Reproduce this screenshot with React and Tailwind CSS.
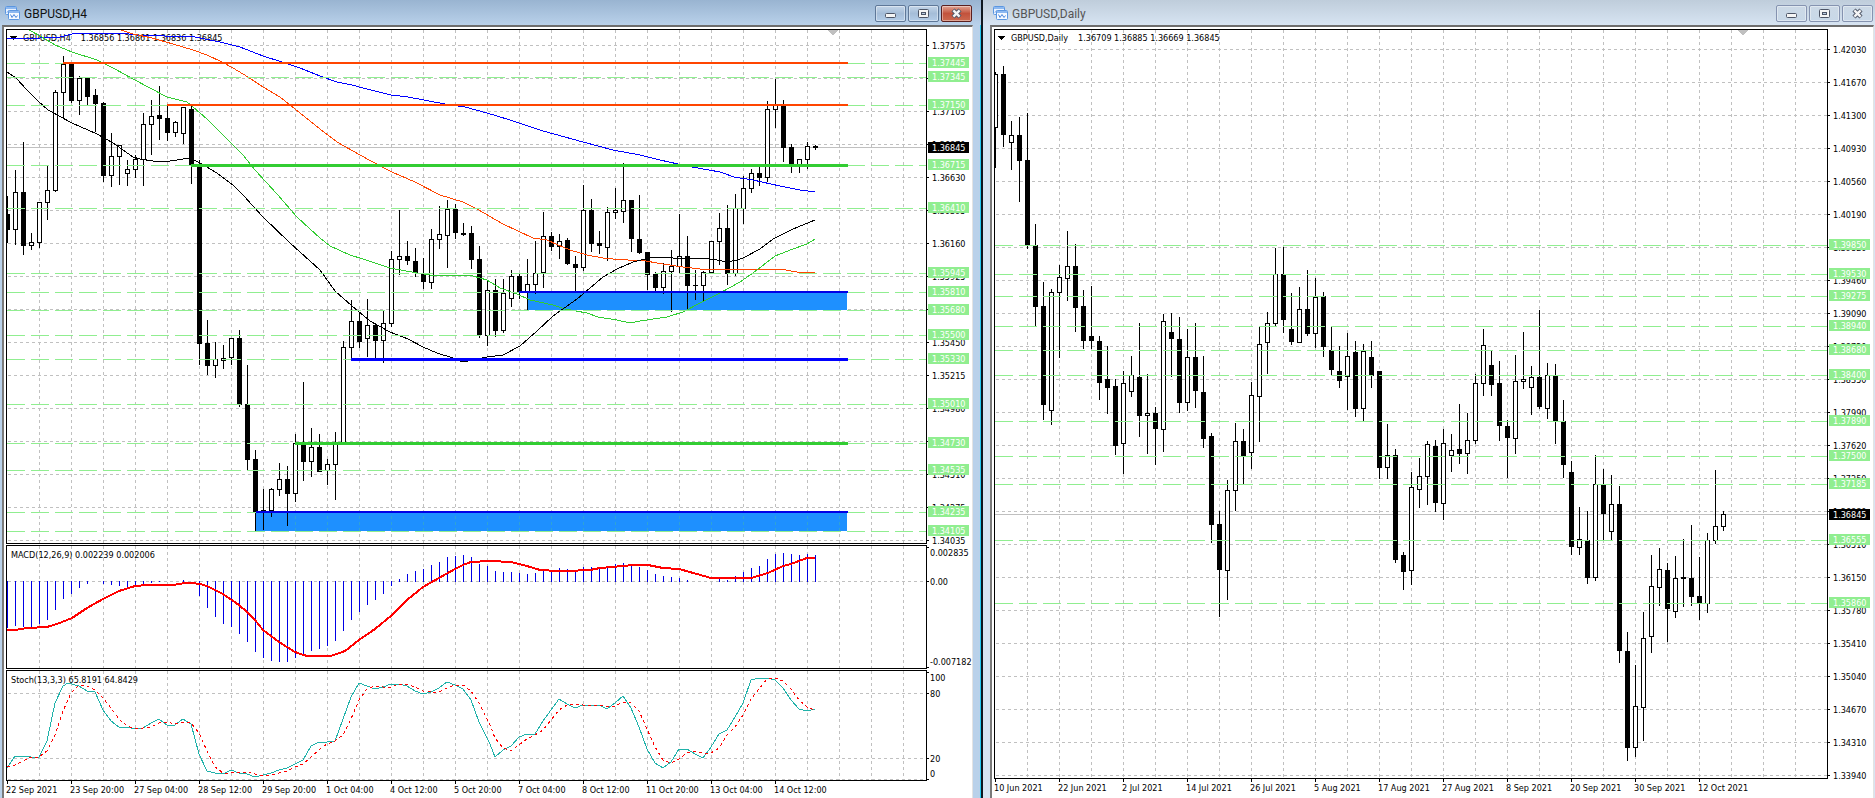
import React from "react";

// [high, body top, body bottom, low, bearish] for every bar, 8px apart
const h4Candles = [
  [196, 214, 230, 243, 1], [170, 192, 230, 245, 0], [142, 192, 246, 255, 1], [233, 242, 246, 250, 0],
  [202, 202, 243, 248, 0], [166, 190, 203, 220, 0], [90, 92, 191, 192, 0], [56, 64, 93, 119, 0],
  [63, 64, 101, 103, 1], [76, 78, 101, 115, 0], [77, 78, 97, 105, 1], [89, 95, 104, 132, 1],
  [102, 103, 176, 182, 1], [133, 156, 176, 187, 0], [145, 145, 157, 185, 0], [160, 169, 174, 186, 0],
  [155, 159, 170, 178, 0], [113, 124, 160, 186, 0], [100, 116, 125, 155, 0], [86, 115, 119, 140, 1],
  [104, 118, 133, 141, 1], [121, 122, 133, 137, 0], [107, 107, 134, 144, 0], [104, 109, 165, 184, 1],
  [160, 165, 344, 365, 1], [320, 343, 366, 375, 1], [342, 359, 366, 378, 0], [345, 358, 361, 369, 0],
  [338, 338, 358, 365, 0], [330, 338, 405, 407, 1], [365, 404, 460, 470, 1], [450, 459, 512, 531, 1],
  [489, 510, 511, 530, 1], [488, 489, 511, 517, 0], [463, 479, 490, 496, 0], [466, 479, 494, 526, 1],
  [434, 443, 494, 502, 0], [382, 443, 462, 481, 1], [428, 447, 462, 477, 0], [434, 447, 472, 472, 1],
  [459, 464, 471, 485, 0], [432, 443, 465, 500, 0], [341, 347, 443, 443, 0], [300, 321, 348, 359, 0],
  [313, 321, 342, 348, 1], [299, 325, 339, 357, 0], [325, 325, 341, 359, 1], [311, 323, 341, 363, 0],
  [251, 259, 324, 327, 0], [210, 256, 260, 275, 0], [241, 256, 261, 265, 1], [248, 261, 273, 277, 1],
  [258, 273, 282, 289, 1], [229, 239, 283, 289, 0], [206, 234, 240, 249, 0], [200, 209, 236, 268, 0],
  [204, 209, 233, 239, 1], [223, 233, 235, 236, 1], [226, 233, 260, 269, 1], [246, 259, 335, 338, 1],
  [281, 290, 336, 346, 0], [279, 290, 331, 337, 1], [279, 293, 331, 333, 0], [270, 276, 299, 307, 0],
  [274, 276, 292, 299, 1], [259, 284, 293, 310, 0], [241, 273, 285, 294, 0], [212, 236, 273, 288, 0],
  [232, 236, 247, 251, 1], [234, 241, 247, 259, 0], [238, 240, 264, 265, 1], [256, 264, 268, 292, 1],
  [185, 210, 268, 271, 0], [199, 210, 244, 252, 1], [231, 243, 246, 254, 1], [207, 212, 248, 261, 0],
  [188, 210, 213, 219, 0], [163, 200, 212, 223, 0], [200, 200, 239, 252, 1], [195, 239, 253, 254, 1],
  [252, 252, 275, 290, 1], [272, 274, 288, 292, 1], [263, 271, 288, 294, 0], [250, 266, 272, 312, 0],
  [214, 256, 267, 273, 0], [236, 256, 286, 310, 1], [270, 285, 286, 300, 1], [271, 272, 286, 301, 0],
  [241, 241, 273, 273, 0], [213, 228, 242, 265, 0], [205, 228, 274, 285, 1], [194, 208, 274, 276, 0],
  [176, 188, 209, 224, 0], [169, 173, 189, 193, 0], [167, 173, 178, 186, 1], [101, 109, 178, 182, 0],
  [79, 105, 110, 128, 0], [100, 105, 148, 162, 1], [144, 147, 165, 173, 1], [159, 159, 165, 173, 0],
  [142, 146, 160, 169, 0], [145, 146, 148, 150, 1],
];

const dailyCandles = [
  [72, 74, 128, 168, 0], [66, 74, 135, 147, 1], [121, 135, 143, 170, 0], [117, 135, 161, 202, 1],
  [113, 160, 245, 249, 1], [224, 245, 307, 326, 1], [282, 306, 405, 420, 1], [289, 292, 411, 425, 0],
  [265, 277, 293, 358, 0], [231, 266, 279, 301, 0], [244, 266, 308, 332, 1], [290, 306, 341, 349, 1],
  [286, 336, 341, 349, 1], [336, 341, 383, 400, 1], [346, 379, 388, 414, 1], [379, 386, 446, 455, 1],
  [371, 383, 444, 474, 0], [356, 375, 392, 397, 0], [323, 377, 416, 437, 1], [374, 413, 416, 454, 0],
  [407, 413, 429, 465, 1], [314, 321, 430, 452, 0], [313, 332, 339, 377, 1], [317, 339, 403, 413, 1],
  [329, 357, 403, 411, 0], [323, 357, 391, 408, 1], [356, 392, 439, 448, 1], [433, 436, 525, 543, 1],
  [511, 524, 570, 617, 1], [480, 490, 571, 600, 0], [423, 441, 491, 511, 0], [429, 441, 456, 484, 1],
  [382, 395, 453, 469, 0], [327, 344, 397, 442, 0], [312, 323, 343, 374, 0], [248, 274, 324, 326, 0],
  [247, 274, 320, 333, 1], [293, 329, 342, 345, 1], [287, 309, 343, 343, 0], [270, 309, 334, 336, 1],
  [278, 297, 334, 348, 0], [292, 296, 347, 357, 1], [327, 350, 370, 375, 1], [346, 371, 381, 388, 1],
  [333, 356, 377, 410, 0], [341, 352, 409, 417, 1], [344, 351, 409, 421, 0], [341, 357, 376, 388, 1],
  [371, 371, 468, 479, 1], [424, 455, 468, 479, 0], [449, 455, 560, 563, 1], [552, 555, 572, 590, 1],
  [472, 487, 571, 585, 0], [458, 476, 490, 508, 0], [441, 444, 477, 505, 0], [440, 446, 503, 512, 1],
  [429, 443, 504, 520, 0], [434, 450, 456, 472, 0], [404, 449, 454, 464, 1], [413, 440, 454, 474, 0],
  [374, 383, 441, 444, 0], [329, 345, 384, 396, 0], [351, 365, 385, 396, 1], [361, 383, 426, 441, 1],
  [420, 426, 438, 478, 1], [355, 381, 439, 454, 0], [332, 379, 382, 389, 0], [366, 377, 388, 415, 0],
  [310, 377, 407, 409, 1], [363, 375, 409, 419, 0], [364, 376, 421, 444, 1], [400, 421, 465, 478, 1],
  [461, 472, 547, 555, 1], [507, 539, 548, 555, 0], [511, 540, 578, 584, 1], [455, 484, 578, 581, 0],
  [469, 484, 514, 540, 1], [475, 504, 532, 540, 0], [486, 504, 651, 663, 1], [632, 651, 748, 761, 1],
  [665, 706, 748, 757, 0], [612, 638, 708, 741, 0], [555, 586, 637, 653, 0], [548, 569, 588, 606, 0],
  [563, 570, 609, 642, 1], [556, 578, 612, 618, 0], [539, 577, 579, 607, 1], [525, 578, 597, 606, 1],
  [557, 596, 603, 620, 1], [533, 540, 604, 613, 0], [470, 526, 541, 544, 0], [511, 514, 527, 531, 0],
];

// moving averages of the H4 chart
const averages = [
  {
    color: "#0000ff",
    points:
      "7,38 40,38 60,37 72,34 90,33 120,33 137,35 165,36 190,36 200,38 220,42 240,47 263,56 282,62 300,68 320,76 337,82 352,85 363,88 391,95 408,97 445,104 465,107 487,113 510,120 543,131 583,142 613,150 640,155 660,160 678,164 692,167 720,172 734,177 753,180 780,186 800,190 815,192",
  },
  {
    color: "#ff4500",
    points:
      "121,30 133,34 152,38 173,44 193,50 207,55 222,62 233,68 248,77 263,87 280,97 295,109 320,129 337,142 360,155 382,167 392,172 415,182 440,195 463,202 477,209 503,224 533,238 547,240 558,245 570,250 587,255 603,258 613,259 628,260 640,260 663,264 683,267 700,269 720,269 733,270 740,269 780,269 797,272 815,272",
  },
  {
    color: "#32cd32",
    points:
      "29,30 42,37 55,45 72,52 97,60 115,69 133,79 150,88 167,97 187,102 193,107 207,119 230,142 243,155 255,170 277,194 297,217 310,229 320,238 330,246 350,255 363,259 390,268 417,273 437,276 450,275 473,276 487,280 500,288 517,294 530,300 553,305 565,309 587,313 598,317 617,320 630,323 640,321 667,317 683,312 700,303 720,293 740,282 753,273 775,256 793,249 807,244 815,239",
  },
  {
    color: "#000000",
    points:
      "7,72 16,78 27,90 37,100 48,110 72,123 97,134 113,143 133,157 140,159 153,161 170,161 190,158 200,163 217,173 233,185 243,195 263,217 290,243 320,270 335,291 352,306 370,321 390,332 408,339 423,347 437,353 453,358 460,361 468,361 478,359 487,357 503,355 520,346 537,331 553,316 577,299 603,277 617,269 633,262 653,257 673,258 700,258 717,260 727,262 737,260 743,258 760,249 773,239 793,229 815,220",
  },
];

const macdBars = [
  47, 45, 46, 46, 43, 39, 29, 18, 13, 7, 3, 0, 3, 4, 5, 6, 5, 4, 2, 1, 0, 0, -1, 0, 15, 27, 36, 43,
  46, 53, 61, 71, 77, 80, 81, 81, 77, 74, 70, 68, 65, 60, 50, 39, 31, 24, 19, 13, 5, -2, -7, -10,
  -12, -16, -19, -24, -25, -26, -24, -17, -15, -10, -9, -9, -8, -7, -8, -11, -10, -13, -12, -10,
  -14, -14, -13, -15, -17, -18, -17, -14, -11, -7, -5, -4, -3, -1, 0, 0, 0, -2, -1, -5, -9, -13,
  -15, -22, -27, -28, -27, -26, -27, -26,
];

const macdSignal =
  "7,630 15,630 27,628 47,627 57,624 72,618 87,608 103,599 119,591 135,586 147,585 173,585 185,583 192,583 200,584 207,586 223,594 239,605 247,612 255,620 263,630 279,642 295,652 303,655 308,656 330,656 337,654 345,651 359,640 375,629 392,615 407,600 423,587 439,578 455,569 463,565 471,562 490,561 511,562 527,566 540,570 557,571 567,571 590,570 600,568 623,566 633,565 648,565 663,568 679,569 697,574 711,578 751,578 768,573 783,566 791,564 807,558 815,558";

const stochMain =
  "7,768 15,756 25,756 31,757 39,757 47,741 55,703 63,686 68,683 79,686 87,691 95,692 103,710 111,721 119,727 127,727 135,729 143,728 151,723 159,719 167,725 175,725 183,719 191,724 199,754 207,771 215,773 223,774 231,770 239,773 247,774 255,777 263,775 271,773 279,770 287,768 295,764 303,760 311,746 319,742 327,742 335,741 343,719 351,697 359,683 367,686 375,689 383,687 391,684 399,684 407,686 415,691 423,694 431,692 439,688 447,682 455,685 463,689 471,700 479,722 490,744 495,757 503,750 511,746 519,737 527,734 535,734 543,721 551,710 559,699 567,704 575,708 583,705 599,705 607,709 615,703 623,696 631,708 639,727 647,749 655,763 663,768 671,762 679,749 687,749 695,754 703,758 711,747 719,734 727,730 735,717 743,703 751,680 759,678 768,678 775,680 783,688 791,700 799,709 807,711 815,709";

const stochSignal =
  "7,767 15,765 23,761 31,757 39,757 47,751 55,735 63,711 71,693 79,685 87,686 95,690 103,698 111,708 119,719 127,726 135,729 143,728 151,727 159,723 167,722 175,724 183,722 191,723 199,733 207,751 215,767 223,773 231,773 239,772 247,772 255,774 263,776 271,775 279,773 287,771 295,767 303,764 311,757 319,750 327,744 335,741 343,735 351,719 359,700 367,689 375,686 383,687 391,687 399,684 407,684 415,687 423,691 431,692 439,692 447,688 455,685 463,685 471,691 479,703 490,725 495,738 503,748 511,751 519,745 527,739 535,735 543,730 551,720 559,710 567,705 575,704 583,705 591,706 599,705 607,707 615,706 623,702 631,703 639,711 647,729 655,747 663,760 671,763 679,759 687,753 695,751 703,753 711,753 719,748 727,735 735,727 743,715 751,699 759,689 767,679 775,678 783,681 791,689 799,700 807,707 815,710";

const h4Prices = [
  "1.37575", "1.37340", "1.37105", "1.36870", "1.36630", "1.36395", "1.36160", "1.35925",
  "1.35690", "1.35450", "1.35215", "1.34980", "1.34745", "1.34510", "1.34275", "1.34035",
];
const dailyPrices = [
  "1.42030", "1.41670", "1.41300", "1.40930", "1.40560", "1.40190", "1.39820", "1.39460",
  "1.39090", "1.38720", "1.38350", "1.37990", "1.37620", "1.37250", "1.36880", "1.36510",
  "1.36150", "1.35780", "1.35410", "1.35040", "1.34670", "1.34310", "1.33940",
];

const h4Levels = [
  ["1.37445", 63], ["1.37345", 77], ["1.37150", 105], ["1.36715", 165], ["1.36410", 208],
  ["1.35945", 273], ["1.35810", 292], ["1.35680", 310], ["1.35500", 335], ["1.35330", 359],
  ["1.35010", 404], ["1.34730", 443], ["1.34535", 470], ["1.34235", 512], ["1.34105", 531],
];
const dailyLevels = [
  ["1.39850", 245], ["1.39530", 274], ["1.39275", 296], ["1.38940", 326], ["1.38680", 350],
  ["1.38400", 375], ["1.37890", 421], ["1.37500", 456], ["1.37185", 484], ["1.36555", 540],
  ["1.35860", 603],
];

const h4Times = [
  "22 Sep 2021", "23 Sep 20:00", "27 Sep 04:00", "28 Sep 12:00", "29 Sep 20:00", "1 Oct 04:00",
  "4 Oct 12:00", "5 Oct 20:00", "7 Oct 04:00", "8 Oct 12:00", "11 Oct 20:00", "13 Oct 04:00",
  "14 Oct 12:00",
];
const dailyTimes = [
  "10 Jun 2021", "22 Jun 2021", "2 Jul 2021", "14 Jul 2021", "26 Jul 2021", "5 Aug 2021",
  "17 Aug 2021", "27 Aug 2021", "8 Sep 2021", "20 Sep 2021", "30 Sep 2021", "12 Oct 2021",
];

// solid level lines of the H4 chart: [x, y, thickness, color]
const h4Lines = [
  [63, 62, 2, "#ff4500"],
  [167, 104, 2, "#ff4500"],
  [191, 164, 3, "#32cd32"],
  [295, 442, 3, "#32cd32"],
  [519, 291, 2, "#0000e6"],
  [351, 358, 3, "#0000ff"],
  [256, 511, 2, "#0000e6"],
];

const steps = (from, step, count) =>
  Array.from({ length: count }, (_, i) => from + i * step);

function Grid({ left, xs, ys, top, bottom }) {
  return (
    <g stroke="#c0c0c0" strokeDasharray="3 3">
      {xs.map((x) => (
        <line key={x} x1={x + 0.5} x2={x + 0.5} y1={top} y2={bottom} />
      ))}
      {ys.map((y) => (
        <line key={y} x1={left + 1} x2={left + 2000} y1={y + 0.5} y2={y + 0.5} />
      ))}
    </g>
  );
}

function Candles({ data, left }) {
  return data.map(([high, top, bottom, low, down], i) => {
    const x = left + i * 8;
    return (
      <g key={i}>
        <rect x={x} y={high} width="1" height={low - high} fill="#000" />
        <rect x={x - 2} y={top} width="5" height={bottom - top} fill="#000" />
        {!down && (
          <rect x={x - 1} y={top + 1} width="3" height={Math.max(bottom - top - 2, 0)} fill="#fff" />
        )}
      </g>
    );
  });
}

function Levels({ levels, left }) {
  return (
    <g stroke="#90ee90" strokeDasharray="18 6">
      {levels.map(([label, y]) => (
        <line key={label} x1={left} x2={left + 2000} y1={y + 0.5} y2={y + 0.5} />
      ))}
    </g>
  );
}

// a bordered plot with its value axis on the right
function Panel({ className, left, top, axis, axisLeft, children }) {
  return (
    <div className={`flex min-h-0 ${className}`}>
      <div className="min-w-0 flex-1 overflow-hidden border border-black">
        <svg className="block h-full w-full text-[9px]" shapeRendering="crispEdges">
          <g transform={`translate(${-left} ${-top - 1})`}>{children}</g>
        </svg>
      </div>
      <svg
        className="block h-full w-[45px] shrink-0 overflow-visible text-[9px]"
        shapeRendering="crispEdges"
      >
        <g transform={`translate(${-axisLeft} ${-top})`}>{axis}</g>
      </svg>
    </div>
  );
}

function PriceAxis({ left, prices, firstY, levels, current, currentY }) {
  return (
    <>
      {prices.map((price, i) => (
        <g key={price}>
          <rect x={left} y={firstY + i * 33} width="2" height="1" />
          <text x={left + 5} y={firstY + i * 33 + 4}>
            {price}
          </text>
        </g>
      ))}
      {levels.map(([label, y]) => (
        <g key={label}>
          <rect x={left + 1} y={y - 6} width="41" height="11" fill="#90ee90" />
          <text x={left + 5} y={y + 3} fill="#fff">
            {label}
          </text>
        </g>
      ))}
      <rect x={left + 1} y={currentY - 5} width="41" height="11" />
      <text x={left + 5} y={currentY + 4} fill="#fff">
        {current}
      </text>
    </>
  );
}

function TimeAxis({ times, className }) {
  return (
    <svg className={`block w-full shrink-0 text-[9px] ${className}`} shapeRendering="crispEdges">
      {times.map((time, i) => (
        <g key={time}>
          <rect x={i * 64 + 1} y="0" width="1" height="3" />
          <text x={i * 64} y="12">
            {time}
          </text>
        </g>
      ))}
    </svg>
  );
}

function ChartIcon() {
  return (
    <svg className="h-[15px] w-[15px] shrink-0" viewBox="0 0 15 15" fill="none">
      <rect x="0.5" y="1.5" width="11" height="8" rx="1" fill="#e8f2ff" stroke="#5b96e0" />
      <rect x="1" y="2" width="10" height="2" fill="#8cb8f0" />
      <path d="M2 7.5 L4 5.5 L5 7" stroke="#4a86dc" />
      <rect x="3.5" y="5.5" width="11" height="9" rx="1" fill="#f6faff" stroke="#5b96e0" />
      <rect x="4" y="6" width="10" height="2" fill="#8cb8f0" />
      <path d="M5.5 9.5 L7 12.5 L9 9.5 L11 12.5 L12.5 10.5" stroke="#4a86dc" />
    </svg>
  );
}

function MinimizeGlyph() {
  return (
    <svg className="h-[11px] w-[13px]" viewBox="0 0 13 11">
      <rect x="1.5" y="5.5" width="10" height="4" rx="1" fill="#f5f5f5" stroke="#4d5566" />
    </svg>
  );
}

function MaximizeGlyph() {
  return (
    <svg className="h-[11px] w-[13px]" viewBox="0 0 13 11">
      <rect x="1.5" y="1.5" width="10" height="8" rx="1" fill="#f5f5f5" stroke="#4d5566" />
      <rect x="4.5" y="4.5" width="4" height="2" fill="#b9cbe0" stroke="#4d5566" />
    </svg>
  );
}

function CloseGlyph() {
  return (
    <svg className="h-[11px] w-[13px]" viewBox="0 0 13 11">
      <path d="M3 2 L10 9 M10 2 L3 9" stroke="#4d5566" strokeWidth="4.4" />
      <path d="M3.4 2.4 L9.6 8.6 M9.6 2.4 L3.4 8.6" stroke="#f5f5f5" strokeWidth="2.4" />
    </svg>
  );
}

function TitleBar({ title, active }) {
  const button = active
    ? "border-[#5f7898] bg-linear-to-b from-[#c3d5e8] via-[#a5bdd8] to-[#b4cde8]"
    : "border-[#8593b0] bg-linear-to-b from-[#ccd9e6] to-[#c8d8e8]";
  const close = active
    ? "border-[#5a2020] bg-linear-to-b from-[#e0a493] via-[#c2523c] to-[#cc6a50]"
    : "border-[#8593b0] bg-linear-to-b from-[#ccd9e6] to-[#c8d8e8]";
  const base =
    "flex h-[17px] w-[31px] items-center justify-center rounded-xs border inset-ring inset-ring-white/40";

  return (
    <header
      className={`flex h-[25px] shrink-0 items-center gap-1 bg-linear-to-b ${
        active
          ? "from-[#99b4d1] to-[#b9d1ea] pr-[9px] pl-[5px]"
          : "from-[#bfcddb] to-[#d7e4f2] pr-[2px] pl-[10px]"
      }`}
    >
      <ChartIcon />
      <h2
        className={`flex-1 pt-[2px] font-[Roboto,sans-serif] text-xs ${
          active ? "text-[#111]" : "text-[#555]"
        }`}
      >
        {title}
      </h2>
      <div className="flex gap-[2px] pt-[2px]">
        <button aria-label="Minimize" className={`${base} ${button}`}>
          <MinimizeGlyph />
        </button>
        <button aria-label="Maximize" className={`${base} ${button}`}>
          <MaximizeGlyph />
        </button>
        <button aria-label="Close" className={`${base} ${close}`}>
          <CloseGlyph />
        </button>
      </div>
    </header>
  );
}

function Caption({ left, symbol, values }) {
  return (
    <>
      <path d={`M${left + 3} 36 h7 l-3 4 h-1 z`} />
      <text x={left + 16} y="41">
        {symbol}
        <tspan dx="10">{values}</tspan>
      </text>
    </>
  );
}

function H4Window() {
  const xs = steps(39, 32, 28);
  return (
    <section className="flex min-w-0 flex-[981] flex-col border-r-2 border-[#101820] bg-[#b9d1ea]">
      <TitleBar title="GBPUSD,H4" active />
      <div className="flex min-h-0 flex-1 border-r border-[#22c8f0] pr-[7px] pl-[2px]">
        <div className="flex min-w-0 flex-1 flex-col gap-px border-t-2 border-r border-l-2 border-t-[#6d6d6d] border-r-[#e3e3e3] border-l-[#7a7a7a] bg-white pt-[2px] pl-[2px]">
          <Panel
            className="flex-1"
            left={7}
            top={29}
            axisLeft={927}
            axis={
              <PriceAxis
                left={927}
                prices={h4Prices}
                firstY={45}
                levels={h4Levels}
                current="1.36845"
                currentY={147}
              />
            }
          >
            <Grid left={7} xs={xs} ys={steps(45, 33, 16)} top={30} bottom={543} />
            <path d="M827 30 h11 l-5 5 h-1 z" fill="#c0c0c0" />
            <rect x="7" y="147" width="2000" height="1" fill="#c0c0c0" />
            <Caption left={7} symbol="GBPUSD,H4" values="1.36856 1.36861 1.36836 1.36845" />
            <rect x="527" y="292" width="320" height="18" fill="#1e90ff" />
            <rect x="256" y="512" width="591" height="19" fill="#1e90ff" />
            <g stroke="#2ea3d6" strokeDasharray="3 3">
              {steps(295, 32, 18).map((x) => (
                <line key={x} x1={x + 0.5} x2={x + 0.5} y1="516" y2="531" />
              ))}
            </g>
            <Candles data={h4Candles} left={7} />
            {averages.map((line) => (
              <polyline key={line.color} points={line.points} fill="none" stroke={line.color} />
            ))}
            <Levels levels={h4Levels} left={7} />
            {h4Lines.map(([x, y, size, color]) => (
              <rect key={y} x={x} y={y} width={848 - x} height={size} fill={color} />
            ))}
          </Panel>

          <Panel
            className="h-[124px] shrink-0"
            left={7}
            top={545}
            axisLeft={927}
            axis={
              <>
                <rect x="927" y="547" width="2" height="1" />
                <rect x="927" y="581" width="2" height="1" />
                <rect x="927" y="667" width="2" height="1" />
                <text x="930" y="556">0.002835</text>
                <text x="930" y="585">0.00</text>
                <text x="930" y="665">-0.007182</text>
              </>
            }
          >
            <Grid left={7} xs={xs} ys={[581]} top={546} bottom={668} />
            <text x="11" y="558">MACD(12,26,9) 0.002239 0.002006</text>
            {macdBars.map((bar, i) => (
              <rect
                key={i}
                x={7 + i * 8}
                y={bar < 0 ? 581 + bar : 581}
                width="1"
                height={bar === 0 ? 0 : Math.abs(bar) + (bar < 0 ? 1 : 0)}
                fill="#0000e6"
              />
            ))}
            <polyline points={macdSignal} fill="none" stroke="#ff0000" strokeWidth="2" />
          </Panel>

          <Panel
            className="h-[111px] shrink-0"
            left={7}
            top={670}
            axisLeft={927}
            axis={
              <>
                <rect x="927" y="672" width="2" height="1" />
                <rect x="927" y="693" width="2" height="1" />
                <rect x="927" y="758" width="2" height="1" />
                <rect x="927" y="779" width="2" height="1" />
                <text x="930" y="681">100</text>
                <text x="930" y="697">80</text>
                <text x="930" y="762">20</text>
                <text x="930" y="777">0</text>
              </>
            }
          >
            <Grid left={7} xs={xs} ys={[693, 758, 779]} top={671} bottom={780} />
            <text x="11" y="683">Stoch(13,3,3) 65.8191 64.8429</text>
            <polyline points={stochMain} fill="none" stroke="#20b2aa" />
            <polyline points={stochSignal} fill="none" stroke="#ff0000" strokeDasharray="3 3" />
          </Panel>
          <TimeAxis times={h4Times} className="-mt-px h-[17px]" />
        </div>
      </div>
    </section>
  );
}

function DailyWindow() {
  return (
    <section className="flex min-w-0 flex-[892] flex-col bg-[#d7e4f2]">
      <TitleBar title="GBPUSD,Daily" />
      <div className="flex min-h-0 flex-1 pr-px pl-[7px]">
        <div className="flex min-w-0 flex-1 flex-col border-t-2 border-r border-l-2 border-t-[#6d6d6d] border-r-[#e3e3e3] border-l-[#7a7a7a] bg-white pt-[2px] pl-[2px]">
          <Panel
            className="flex-1"
            left={995}
            top={29}
            axisLeft={1828}
            axis={
              <PriceAxis
                left={1828}
                prices={dailyPrices}
                firstY={49}
                levels={dailyLevels}
                current="1.36845"
                currentY={514}
              />
            }
          >
            <Grid left={995} xs={steps(1027, 32, 25)} ys={steps(49, 33, 23)} top={30} bottom={778} />
            <path d="M1737 30 h11 l-5 5 h-1 z" fill="#c0c0c0" />
            <rect x="995" y="514" width="2000" height="1" fill="#c0c0c0" />
            <Caption left={995} symbol="GBPUSD,Daily" values="1.36709 1.36885 1.36669 1.36845" />
            <Candles data={dailyCandles} left={995} />
            <Levels levels={dailyLevels} left={995} />
          </Panel>
          <TimeAxis times={dailyTimes} className="h-[19px]" />
        </div>
      </div>
    </section>
  );
}

export default function App() {
  return (
    <main className="flex h-screen overflow-hidden bg-white font-['DejaVu_Sans_Condensed','DejaVu_Sans',sans-serif] text-black">
      <H4Window />
      <DailyWindow />
    </main>
  );
}
